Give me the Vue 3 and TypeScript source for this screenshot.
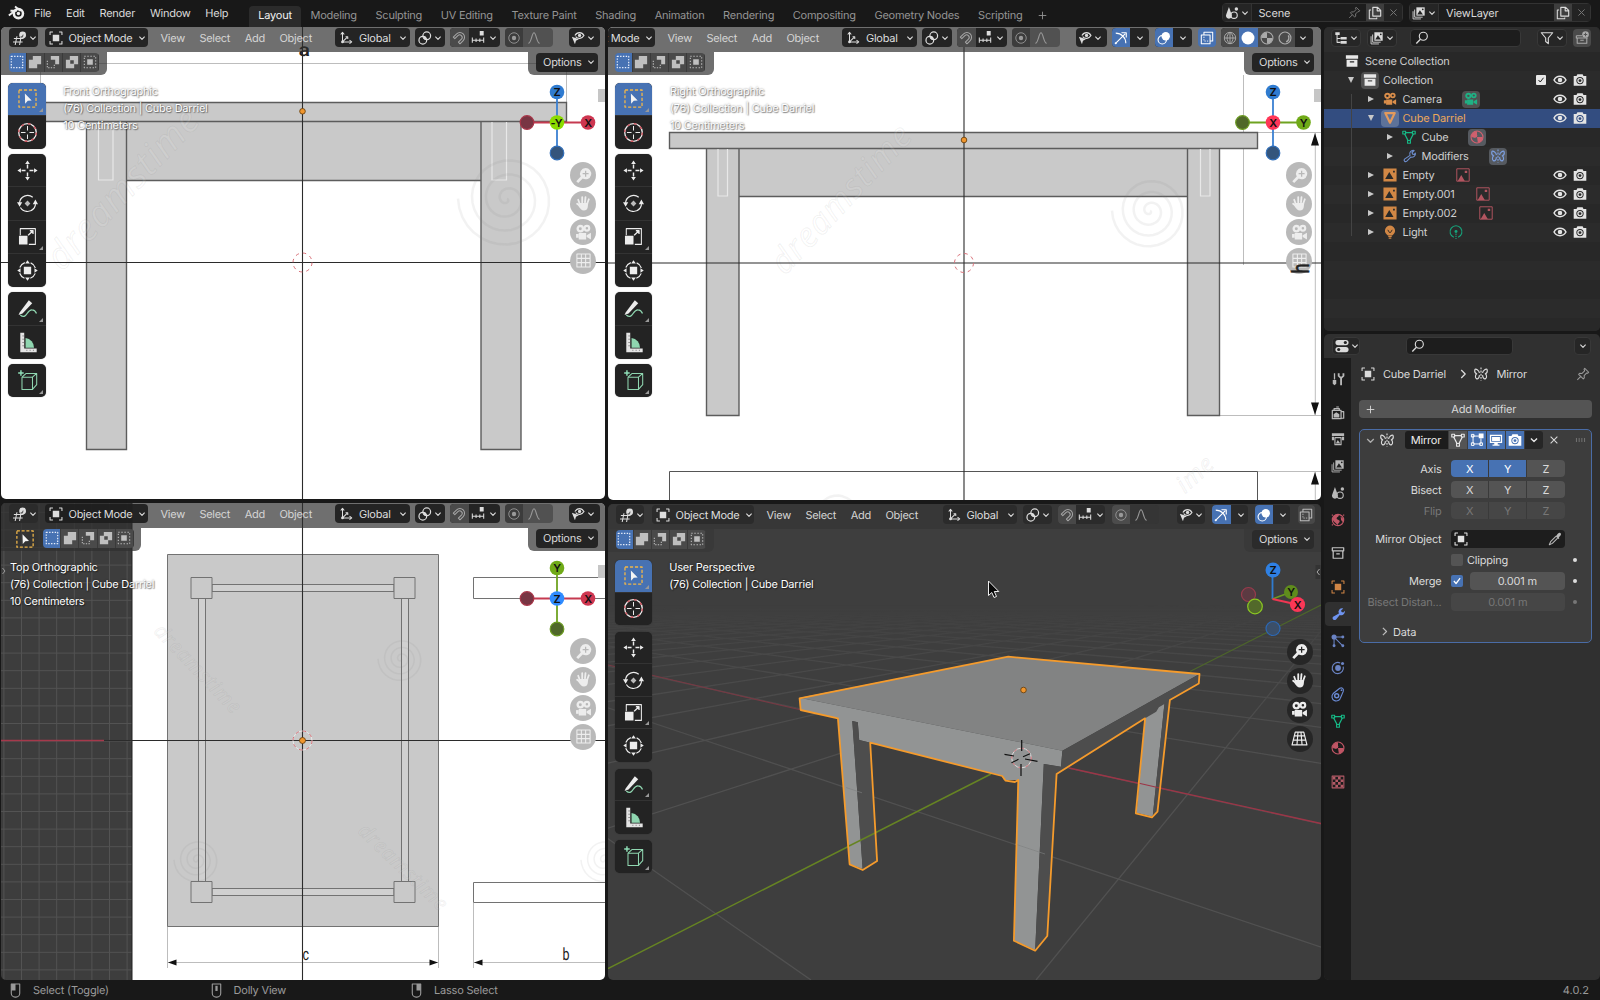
<script setup lang="ts">
import { h } from 'vue'

const s = (d: string, w = 1.2, c = 'currentColor', extra = '') =>
  `<path d="${d}" fill="none" stroke="${c}" stroke-width="${w}" stroke-linejoin="round" ${extra}/>`
const f = (d: string, c = 'currentColor') => `<path d="${d}" fill="${c}"/>`
const ring = (x: number, y: number, r: number, w = 1.2, c = 'currentColor') =>
  `<circle cx="${x}" cy="${y}" r="${r}" fill="none" stroke="${c}" stroke-width="${w}"/>`
const dot = (x: number, y: number, r: number, c = 'currentColor') => `<circle cx="${x}" cy="${y}" r="${r}" fill="${c}"/>`

const movieCamera =
  ring(5, 4.4, 2.5, 2.2) + ring(11.2, 4, 2.2, 2) + f('M3.5 8.5h7v6h-7zM11 10.5l4-2.300v6.300L11 12.300z') + f('M1 9.500h2.500v3.500H1z')
const mirror =
  s('M6.2 6.8C6 4 1.600 .8.900 3.300c-.4 2.200.800 4 2.200 4.400C1.300 9 1.200 12.300 2.700 13.300c1.900.9 3.400-1 3.500-4', 1.3) +
  s('M9.800 6.800C10 4 14.400.8 15.100 3.300c.4 2.200-.8 4-2.200 4.400 1.800 1.300 1.900 4.600.4 5.600-1.900.9-3.400-1-3.500-4', 1.3) +
  s('M8 .5v15', 1.3, 'currentColor', 'stroke-dasharray="2.200 1.400"')
const meshData =
  s('M3.500 3h9M2.900 4.200l4.200 8.200M13.100 4.200l-4.200 8.200', 1.4) +
  s('M.900 1.400h3.200v3.200H.900zM11.900 1.400h3.200v3.200h-3.200zM6.400 12h3.200v3.200h-3.200z', 1.3)

const icons: Record<string, string> = {
  blender:
    s('M.8 10.800L8.600 4.800M2.300 6.300h6', 1.800) + s('M6.600 2.300l5.400 4.200', 1.800) + ring(9.800, 9, 4.300, 2.400) + dot(9.800, 9, 1.600),
  chevron: s('M4.500 6.300L8 9.800l3.500-3.500', 1.500),
  right: s('M6 3.500L10.500 8 6 12.500', 1.500),
  plus: s('M8 2.500v11M2.500 8h11', 1.300),
  close: s('M3.500 3.500l9 9M12.500 3.500l-9 9', 1.400),
  view3d: s('M1 8.500h11M0 12.500h11M4.500 6L2.500 16M9 8l-1.500 8', 1.200) + dot(11, 4.500, 3.900) + f('M8 6.500c2 0 3-1.500 3.500-3 1 1.500 0 4-1.500 4.200z', '#555'),
  object: s('M1.200 4.500V1.200h3.300M11.500 1.200h3.300v3.300M14.800 11.500v3.300h-3.300M4.500 14.800H1.200v-3.300', 1.200) + f('M4.300 4.300h7.400v7.400H4.300z'),
  orient: s('M4 13V2.500M4 12.500h10M4 12.500L9.500 7', 1.200) + s('M2 4l2-2.500L6 4M12 10.500l2.500 2L12 14.500M7.500 6.500h2.500V9', 1.200) + dot(4, 12.500, 1.600),
  pivot: ring(10, 5.500, 4.400, 1.400) + ring(5.500, 10.500, 4.400, 1.400) + dot(7.800, 8, 1.600),
  magnet: s('M3.200 8.700L6.700 5.200a2.900 2.900 0 014.100 4.100L7.300 12.800l1.800 1.800 3.700-3.700a5.200 5.200 0 00-7.500-7.500L1.500 7z', 1.200),
  increment: s('M1.500 7.500v6M5.800 8.500v4M10.100 8.500v4M14.500 7.500v6M1.500 10.500h13', 1.200) + f('M10 0h4.500v5H10z'),
  propdot: ring(8, 8, 6, 1) + dot(8, 8, 2.500),
  curve: s('M1.500 14c3.500 0 4-12 6.500-12s3 12 6.500 12', 1.300),
  visibility: f('M1 6.500l8 3-3.300 1.500L4.500 15z') + s('M4.500 5.200c2.500-4.500 8-4.500 10.300 0-2.300 4-7 4.200-9.500 1.300', 1.400) + dot(9.800, 5, 1.900),
  gizmo: s('M2 2.500c6.500 0 11.500 5 11.500 11.500M1.500 14.500L13 3', 1.300) + s('M8.500 2H14v5.500', 1.300) + dot(2, 14, 1.200),
  overlay: dot(10, 6, 4.800) + ring(6, 10, 4.800, 1.300),
  xray: s('M1.500 4.500h10v10h-10zM4.500 4.500v-3h10v10h-3', 1.200) + s('M4.500 6.500v5h5', 1, 'currentColor', 'stroke-dasharray="1.500 1.300"'),
  wire: ring(8, 8, 6.500, 1.100) + s('M1.500 8h13M8 1.500v13M8 1.500c-4.500 3-4.500 10 0 13M8 1.500c4.500 3 4.500 10 0 13', 1.100),
  solid: dot(8, 8, 7.400),
  matprev: ring(8, 8, 6.800, 1.200) + f('M8 1.500a6.500 6.500 0 00-6.500 6.500H8zM8 8h6.500A6.500 6.500 0 018 14.500z'),
  rendered: ring(8, 8, 6.800, 1.300) + s('M11.800 5c1.500 3 .5 6.300-2.500 7.500', 1.600),
  selNew: s('M1.500 1.500h13v13h-13z', 1.400, 'currentColor', 'stroke-dasharray="1.600 1.600"'),
  selAdd: f('M5.500 1h9.500v9.500h-4.500v4.500H1V5.500h4.500z'),
  selSub: f('M5.500 1h9.500v9.500h-4.500v-5h-5z') + s('M1.500 6.500V14.500H9.500V11', 1.200, 'currentColor', 'stroke-dasharray="1.500 1.500"'),
  selXor: `<path fill-rule="evenodd" d="M5.500 1h9.500v9.500h-4.500v4.500H1V5.500h4.500zM6 6v4h4V6z" fill="currentColor"/>`,
  selAnd: s('M1.500 1.500h13v13h-13z', 1.200, 'currentColor', 'stroke-dasharray="1.500 2"') + f('M4.800 4.800h6.400v6.400H4.800z'),
  toolSelect: s('M1.500 1.500h13v13h-13z', 1, '#f0b64a', 'stroke-dasharray="2.400 1.400"') + f('M6 4.200l5.200 5.400-3 .2L6.200 12z', '#f4f4f4'),
  toolCursor:
    ring(8, 8, 6.700, 1, '#eee') +
    `<circle cx="8" cy="8" r="6.700" fill="none" stroke="#d0505a" stroke-width="1" stroke-dasharray="2.200 3.060"/>` +
    s('M8 3v3.500M8 9.500V13M3 8h3.500M9.500 8H13', .8),
  toolMove: s('M8 3.500v3M8 9.500v3M3.500 8h3M9.500 8h3', 1.100) + f('M8 .300l1.800 2.700H6.200zM8 15.700l1.800-2.700H6.200zM.3 8l2.700-1.800v3.600zM15.700 8l-2.700-1.800v3.600z'),
  toolRotate: s('M2.600 11a6.200 6.200 0 0010 1M1.900 7.500A6.200 6.200 0 0112 3.300M14.100 8.500A6.200 6.200 0 0111 13.300', .9) + f('M0 7h4l-2 3.500zM12 8.500h4L14 5z') + f('M8 5.800L10.200 8 8 10.200 5.800 8z', '#bbb'),
  toolScale: s('M2.500 7V2h11.500v12H9', .8) + f('M1.500 7.500H8V14H1.500z') + s('M8.500 7L12 3.800M9.800 3.600h2.400V6', 1),
  toolTransform:
    `<circle cx="8" cy="8" r="6.300" fill="none" stroke="currentColor" stroke-width=".9" stroke-dasharray="5.400 4.500" stroke-dashoffset="-2.250"/>` +
    f('M5.200 5.200h5.600v5.600H5.200z') + f('M8 .2l1.800 2.500H6.200zM8 15.800l1.800-2.500H6.200zM.2 8l2.500-1.800v3.600zM15.800 8l-2.500-1.800v3.600z'),
  toolNote: f('M2 11L9 1.800 11.600 4 4.200 11.800 1.200 13z') + s('M2.500 13c5 4 5-4.500 9-4 2.500.2 2.800 1.600 3.300 2.800', 1, '#8fd6b0'),
  toolMeasure: f('M2.500.5h3v12h9.500v3H2.500z', '#e4e4e4') + f('M6.500 12V4.500A7.500 7.500 0 0113 12z', '#8fd6b0') + s('M4 3h1.500M4 5.500h1.500M4 8h1.500M4 10.500h1.500M7.500 13.500v1M10 13.500v1M12.500 13.500v1', .5, '#666'),
  toolCube: s('M3.800 5.500h8v9.300h-8zM3.800 5.500L7 2.600h8L11.800 5.500M15 2.600v8.600l-3.200 3.600', .8, '#8fd6b0') + s('M3 .2v4.200M.9 2.300h4.200', 1.100, '#8fe0b8'),
  zoom: `<path fill-rule="evenodd" fill="currentColor" d="M10 1a5.300 5.300 0 11-2.700 9.900L3 15 1.200 13.300l4.200-4.300A5.300 5.300 0 0110 1zM9.400 3.500v2.200H7.200v1.200h2.200v2.200h1.200V6.900h2.200V5.700h-2.200V3.500z"/>`,
  hand: s('M4.500 8.500L3 4.500M6.800 7V2M9.400 7l.5-5M11.500 8l1.500-4M5 10.500l-3-2.300', 1.700, 'currentColor', 'stroke-linecap="round"') + f('M3.800 7.500h8.600l-.4 4c-.6 2-1.600 3-3.500 3-2.500 0-3.500-1.500-5.500-4.500z'),
  cam: movieCamera,
  grid: s('M1.800 1.800h12.400v12.400H1.800zM6 2v12M10 2v12M2 6h12M2 10h12', 1),
  persp: s('M4 2h8l3 12H1zM6.600 2L5.600 14M9.400 2l1 12M3.300 5.500h9.400M2.300 9.500h11.400', 1.100),
  tree: s('M3.500 4v9.500M3.500 8.500h4M3.500 13h4', 1.200) + f('M1.500 1.500h5v3h-5zM7.500 6.800h7v3h-7zM7.500 11.500h7v3h-7z'),
  layers: f('M5 1.500h9.500V11H5z') + s('M3 4v8.800h9.200M1.200 6v8.800h9', 1) + f('M6 9.800L9 4.800l3.500 5z', '#222') + dot(12.300, 3.800, 1, '#222'),
  search: ring(9.500, 6, 4.600, 1.300) + s('M6.200 9.500L1.500 14.300', 1.500),
  filter: s('M1.500 2h13L9.500 8v6.500L6.500 12V8z', 1.300),
  newColl: s('M1.500 5.500h6.500M13.500 8v6h-11V8M1.500 5.500V8H14.500', 1.200) + s('M6 10.500h4', 1.200) + dot(12, 4, 3.800) + s('M12 2v4M10 4h4', 1.200, '#555'),
  pin: s('M10 1.500l4.500 4.500-1 1-1.200-.2-3 3 .2 2.700-1.200 1.200L3 8.400l1.200-1.200 2.700.2 3-3L9.200 2.600zM5.500 10.700L1.500 14.700', 1.200),
  copy: s('M5.500 1.500h5.500l3.500 3.500v6.500h-9zM10.500 1.800v3.700h3.800', 1.300) + s('M3.500 4.500h-2v10h8.500v-1.500', 1.200),
  collection: f('M1 1.500h14v4H1z') + `<path fill-rule="evenodd" fill="currentColor" d="M1.800 6.500h12.400v8H1.800zM5.500 8.300v1.500h5V8.300z"/>`,
  archive: s('M1.500 2h13v3.500h-13zM2.500 5.500v8.500h11V5.500M6 9h4', 1.400),
  tri: s('M2.600 2.400h10.800L8 13.400z', 2.500),
  mesh: meshData,
  wrench: s('M9.200 7.300a4 4 0 014.600-5.600L11.500 4l.6 1.800 1.900.4 1.300-1.500c.5 3-2.200 5.300-5.300 4.500L5.500 13.900c-1.800 1.500-4-.5-2.600-2.300z', 1.300),
  wrenchFill: f('M9 7.500a4.200 4.200 0 015-5.900L11.500 4l.6 1.800 1.900.4 1.700-2c.7 3.500-2.500 6-5.700 5L5.800 14.200c-2.200 2-5.300-.8-3.400-3.200z'),
  image: `<path fill-rule="evenodd" fill="currentColor" d="M.5.5h15v15H.5zM2.500 12.500h9.500L7.200 4.500zM11.500 3v2h2V3z"/>`,
  imageLine: s('M.9.9h14.200v14.200H.900z', 1.100) + f('M2 14.800L6 8l4 6.800zM10 3h2.800v2.800H10z'),
  light: f('M8 .5a6 6 0 014 10.200L10.500 12h-5L4 10.700A6 6 0 018 .5z') + s('M6 13h4M6.500 15h3', 1.300) + s('M5.500 5.500l1.800 3h1.400l1.800-3', 1, '#222'),
  lightData: s('M5.500 14A6.800 6.800 0 1110.500 14', 1.300) + dot(8, 7.500, 1.700) + s('M8 9.800v6.200', 1.300, 'currentColor', 'stroke-dasharray="1.500 1"'),
  material: ring(8, 8, 6.800, 1.300) + f('M8 1.500A6.500 6.500 0 001.500 8l4 .8L8 8zM8 8l1 6.500C12.500 14 14.500 11 14.500 8z') + dot(5.500, 6, 2.700),
  mirror,
  eye: s('M1.200 8c3-5.600 10.600-5.600 13.600 0-3 5.600-10.600 5.600-13.600 0z', 1.800) + dot(8, 8, 2.600),
  photo: `<path fill-rule="evenodd" fill="currentColor" d="M.8 3.500H4l1-2.200h6l1 2.200h3.200v11H.8zM8 4.500a4.200 4.200 0 100 8.400 4.200 4.200 0 000-8.400z"/>` + ring(8, 8.700, 2.400, 1.400),
  tools: s('M4 1.500v7', 1.500) + f('M2 9h4v4.500L4 15l-2-1.500z') + s('M8.800 1.500v3L11.500 7l2.700-2.500v-3M11.500 7v8', 2.100),
  render: s('M1.500 5h10v9.500h-10zM3.500 5V3h6v2M11.500 6.500h3V14h-3', 1.400) + f('M3 9.500l3-2.500 3.500 2.500V13H3z') + s('M6 1.200h3', 1.200),
  output: f('M1 1.500h14v3H1zM1 5.500h2.500v4H1zM12.500 5.500H15v4h-2.500z') + s('M4.500 6.500h7v8h-7z', 1.300) + f('M5.500 13l2.300-4 2.800 4z'),
  scene: f('M4.500 1l3 8.500a3.400 3.400 0 11-6 0z') + ring(10.300, 10.500, 3.700, 1.300) + dot(13, 3.500, 2),
  world: ring(8, 8, 6.500, 1.300) + f('M3 3.500c2-2 5.500-2 6-1 0 2-3 2-2.500 4 1 1.500 3.500 1 3.500 3S7.500 12 7.500 14C5.500 11 2.500 10 2 7.500zM11 4l3 2.500-.5 4-2-2.500z') + s('M1.500 1.500v2M14.500 1.500v2M1.500 14.500v-2', 1),
  particles: s('M3.500 3.500h10M3.500 3.500v10M3.500 3.500l10 10', 1.200) + dot(3.500, 3.500, 2.900) + dot(13.500, 3.500, 1.700) + dot(3.500, 13.500, 1.700) + dot(13.500, 13.500, 1.700),
  physics: s('M10.500 2.200A6.400 6.400 0 1014 6.500', 1.300) + dot(8, 8, 3.300) + dot(13.200, 2.800, 1.800),
  constraint: s('M2.500 7.500L10 1.500c2.500-1.500 5 .5 4 3.500L11 12A5 5 0 112.500 7.500z', 1.300) + ring(6.500, 10, 2.300, 1.600) + dot(12, 3.700, 1),
  texture: s('M1.300 1.300h13.400v13.400H1.300z', 1.200) + f('M2 2h3v3H2zM8 2h3v3H8zM5 5h3v3H5zM11 5h3v3h-3zM2 8h3v3H2zM8 8h3v3H8zM5 11h3v3H5zM11 11h3v3h-3z'),
  editmode: s('M3 3.500h8M3.500 3v9M4 12.500h8.500M12.500 12V6', 1.100) + s('M1.600 1.600h3v3h-3zM1.600 11.200h3v3h-3zM11.200 11.200h3v3h-3z', 1.100) + f('M10 .5h5.500V6H10z'),
  monitor: `<path fill-rule="evenodd" fill="currentColor" d="M1 2h14v9.500H1zM2.500 3.500V10h11V3.500z"/>` + f('M3.500 4.500h9V9h-9zM6 11.500h4v1.500h2v1.500H4V13h2z'),
  dropper: f('M9 4.500l1-.8c1-2 2.500-3.200 4-2.700 1.300.6 1.300 2.500-1 4.300l-.7 1 .7.800-1 1L8 4.300z') + s('M9 5L3 11l-1.500 3.500L5 13l6-6', 1.200),
  props: f('M3.500 1h9a3 3 0 010 6h-9a3 3 0 010-6z') + dot(11.800, 4, 1.800, '#222') + f('M3.500 9h9a3 3 0 010 6h-9a3 3 0 010-6z') + dot(4.200, 12, 1.800, '#222'),
  check: s('M3 8l3.500 4L13 3.500', 2),
  mouseL: s('M3.500 1h9v10a4 4 0 01-4 4h-1a4 4 0 01-4-4z', 1.200) + f('M3.500 1H8v7H3.500z'),
  mouseM: s('M3.500 1h9v10a4 4 0 01-4 4h-1a4 4 0 01-4-4z', 1.200) + f('M6.800 3h2.400v5.500H6.800z'),
  mouseR: s('M3.500 1h9v10a4 4 0 01-4 4h-1a4 4 0 01-4-4z', 1.200) + f('M8 1h4.500v7H8z'),
}

const Icon = (p: { n: string }) => h('svg', { viewBox: '0 0 16 16', class: 'ic', fill: 'currentColor', innerHTML: icons[p.n] })

const menus = ['File', 'Edit', 'Render', 'Window', 'Help']
const workspaces = ['Layout', 'Modeling', 'Sculpting', 'UV Editing', 'Texture Paint', 'Shading', 'Animation', 'Rendering', 'Compositing', 'Geometry Nodes', 'Scripting']

interface View {
  id: string
  box: string
  lines: string[]
  tools: boolean
  nav: string
}
const front: View = { id: 'front', box: '1 27 603.5 472', lines: ['Front Orthographic', '(76) Collection | Cube Darriel', '10 Centimeters'], tools: true, nav: 'grid' }
const top: View = { id: 'top', box: '1 503 603.5 476.5', lines: ['Top Orthographic', '(76) Collection | Cube Darriel', '10 Centimeters'], tools: false, nav: 'grid' }
const right: View = { id: 'side', box: '608 27 712.5 473', lines: ['Right Orthographic', '(76) Collection | Cube Darriel', '10 Centimeters'], tools: true, nav: 'grid' }
const user: View = { id: 'user', box: '608 504 712.5 475.5', lines: ['User Perspective', '(76) Collection | Cube Darriel'], tools: true, nav: 'persp' }
const columns = [[front, top], [right, user]]

const selModes = ['selNew', 'selAdd', 'selSub', 'selXor', 'selAnd']
const toolGroups = [['toolSelect', 'toolCursor'], ['toolMove', 'toolRotate', 'toolScale', 'toolTransform'], ['toolNote', 'toolMeasure'], ['toolCube']]
const cornered = ['toolSelect', 'toolScale', 'toolNote', 'toolCube']

// Floor grid: both line families are evenly spaced where they cross the bottom edge.
const floor: string[] = []
for (let k = -9; k <= 24; k++) floor.push(`M245 586L${2027 + 608 * k} 980`)
for (let k = -24; k <= 9; k++) if (k !== 0) floor.push(`M1357 587L${586 + 450 * k} 980`)
const floorPath = floor.join('')

const gridPath =
  Array.from({ length: 8 }, (_, i) => `M${(3.9 + 17.6 * i).toFixed(1)} 503V980`).join('') +
  Array.from({ length: 27 }, (_, i) => `M1 ${(512.3 + 17.6 * i).toFixed(1)}H132`).join('')

const swirl = (cx: number, cy: number, r: number) => {
  let d = `M${cx} ${cy}`
  for (let a = 0; a <= 110; a++) {
    const t = a * 0.2
    const q = (r * t) / 22
    d += `L${(cx + q * Math.cos(t)).toFixed(1)} ${(cy + q * Math.sin(t)).toFixed(1)}`
  }
  return d
}

interface Row { name: string; icon: string; color: string; depth: number; open?: boolean; extra?: string; extraColor?: string; boxed?: boolean; iconBox?: boolean; active?: boolean; toggles?: boolean; check?: boolean }
const rows: Row[] = [
  { name: 'Collection', icon: 'collection', color: '#e8e8e8', depth: 0, open: true, iconBox: true, toggles: true, check: true },
  { name: 'Camera', icon: 'cam', color: '#d98d4a', depth: 1, extra: 'cam', extraColor: '#1fb184', boxed: true, toggles: true },
  { name: 'Cube Darriel', icon: 'tri', color: '#e39a5c', depth: 1, open: true, iconBox: true, active: true, toggles: true },
  { name: 'Cube', icon: 'mesh', color: '#16b986', depth: 2, extra: 'material', extraColor: '#d0606e', boxed: true },
  { name: 'Modifiers', icon: 'wrench', color: '#6c8ccb', depth: 2, extra: 'mirror', extraColor: '#7c9fe0', boxed: true },
  { name: 'Empty', icon: 'image', color: '#d18745', depth: 1, extra: 'imageLine', extraColor: '#b35560', toggles: true },
  { name: 'Empty.001', icon: 'image', color: '#d18745', depth: 1, extra: 'imageLine', extraColor: '#b35560', toggles: true },
  { name: 'Empty.002', icon: 'image', color: '#d18745', depth: 1, extra: 'imageLine', extraColor: '#b35560', toggles: true },
  { name: 'Light', icon: 'light', color: '#d18745', depth: 1, extra: 'lightData', extraColor: '#16a57c', toggles: true },
]

const tabs = [
  { i: 'tools', c: '#b8b8b8', end: true }, { i: 'render', c: '#b8b8b8' }, { i: 'output', c: '#b8b8b8' }, { i: 'layers', c: '#b8b8b8' },
  { i: 'scene', c: '#b8b8b8' }, { i: 'world', c: '#c05565', end: true }, { i: 'archive', c: '#c4c4c4', end: true }, { i: 'object', c: '#d08545' },
  { i: 'wrenchFill', c: '#6f94f0', on: true }, { i: 'particles', c: '#6a83c4' }, { i: 'physics', c: '#6a83c4' }, { i: 'constraint', c: '#6a8ad4' },
  { i: 'mesh', c: '#16b986' }, { i: 'material', c: '#c05565', end: true }, { i: 'texture', c: '#b25a66' },
]
const axes = [
  { label: 'Axis', on: 2 }, { label: 'Bisect', on: 0 }, { label: 'Flip', on: 0, off: true },
]
const hints = [{ i: 'mouseL', t: 'Select (Toggle)' }, { i: 'mouseM', t: 'Dolly View' }, { i: 'mouseR', t: 'Lasso Select' }]
</script>

<template>
  <div class="app">
    <header class="topbar">
      <Icon n="blender" class="logo" />
      <nav class="menus"><span v-for="m in menus" :key="m">{{ m }}</span></nav>
      <nav class="tabs">
        <span v-for="(w, i) in workspaces" :key="w" :class="{ on: i === 0 }">{{ w }}</span>
        <Icon n="plus" class="addtab" />
      </nav>
      <div class="idblock scene-id">
        <span class="pick"><Icon n="scene" /><Icon n="chevron" class="chev" /></span>
        <span class="name">Scene</span>
        <Icon n="pin" class="dim pinned" /><span class="copy"><Icon n="copy" /></span><span class="x"><Icon n="close" class="dim" /></span>
      </div>
      <div class="idblock layer-id">
        <span class="pick"><Icon n="layers" /><Icon n="chevron" class="chev" /></span>
        <span class="name">ViewLayer</span>
        <span class="copy"><Icon n="copy" /></span><span class="x"><Icon n="close" class="dim" /></span>
      </div>
    </header>

    <main class="work">
      <div v-for="(col, ci) in columns" :key="ci" class="col" :class="'col' + ci">
        <section v-for="v in col" :key="v.id" class="view" :class="v.id">
          <svg class="canvas" :viewBox="v.box" preserveAspectRatio="none">
            <template v-if="v.id === 'front'">
              <rect x="0" y="27" width="605" height="473" fill="#fff" />
              <path d="M40.500 104V63.500H566.500V104" class="pale" />
              <g class="solid">
                <path d="M86.500 121.500h40v328h-40zM481 121.500h40v328h-40zM126.500 121.500H481v59H126.500zM40 102.500H566.500v19H40z" />
              </g>
              <path d="M98.500 122v58h14.500v-58M492 122v58h14.500v-58" class="inner" />
              <path :d="swirl(507, 199, 49)" class="mark" />
              <text class="wm" transform="translate(62 272) rotate(-47)" font-size="37">dreamstime</text>
              <path d="M302.500 27V499M1 262.500H605" class="axis" />
              <text x="298.500" y="56" class="dimtext big" textLength="11.500" lengthAdjust="spacingAndGlyphs">a</text>
              <circle cx="302.500" cy="262.500" r="9.500" class="cursor" />
              <circle cx="302.500" cy="111.300" r="2.800" class="origin" />
              <path d="M598 89h7v13h-7z" fill="#c6c6c6" />
              <g class="gz">
                <path d="M557 92v61" stroke="#3a80d2" /><path d="M527 122.500h61" stroke="#c53a50" />
                <circle cx="557" cy="92" r="7.300" fill="#2f7bd0" /><circle cx="557" cy="153" r="6.800" fill="#34557c" stroke="#2f6db8" />
                <circle cx="527" cy="122.500" r="6.800" fill="#783543" stroke="#a83548" /><circle cx="588" cy="122.500" r="7.300" fill="#ce3650" />
                <circle cx="557" cy="122.500" r="7.300" fill="#8bdc00" />
                <text x="557" y="96">Z</text><text x="588" y="126.500">X</text><text x="556.500" y="126.500">-Y</text>
              </g>
            </template>

            <template v-else-if="v.id === 'side'">
              <rect x="608" y="27" width="713" height="474" fill="#fff" />
              <path d="M1243.500 75V265M1257 132.500H1321M1220 415.500H1321M1257 471.500H1321M1315.300 133V415M1315.300 472V500" class="pale" />
              <g class="solid">
                <path d="M706.500 148.500h32.500v267h-32.500zM1187.500 148.500h32v267h-32zM739 148.500h448.500v48H739zM669.500 132.500H1257.500v16H669.500z" />
              </g>
              <path d="M718 149v47h9.500v-47M1200.500 149v47h9.500v-47" class="inner" />
              <path d="M669.500 500V471.500H1257.500V500" fill="none" stroke="#555" />
              <path d="M1315 133l4 12.500h-8zM1315 415l4-12.500h-8zM1315 472l4 12.500h-8z" fill="#111" />
              <path :d="swirl(1150, 211, 38)" class="mark" />
              <path :d="swirl(836, 516, 26)" class="mark" />
              <text class="wm" transform="translate(785 276) rotate(-47)" font-size="34">dreamstime</text>
              <text class="wm" transform="translate(1185 494) rotate(-42)" font-size="24">ime</text>
              <path d="M964 40V500M608 263H1321" class="axis" />
              <circle cx="964" cy="263" r="9.500" class="cursor" />
              <circle cx="964" cy="140" r="2.800" class="origin" />
              <path d="M1314 89h7v13h-7z" fill="#c6c6c6" />
              <g class="gz">
                <path d="M1273 92v61" stroke="#3a80d2" /><path d="M1242.500 122.500h61" stroke="#6fa321" />
                <circle cx="1273" cy="92" r="7.300" fill="#2f7bd0" /><circle cx="1273" cy="153" r="6.800" fill="#34557c" stroke="#2f6db8" />
                <circle cx="1242.500" cy="122.500" r="6.800" fill="#50682a" stroke="#6a9a20" /><circle cx="1303.500" cy="122.500" r="7.300" fill="#70aa18" />
                <circle cx="1273" cy="122.500" r="7.300" fill="#ff3658" />
                <text x="1273" y="96">Z</text><text x="1273" y="126.500">X</text><text x="1303.500" y="126.500">Y</text>
              </g>
            </template>

            <template v-else-if="v.id === 'top'">
              <rect x="0" y="503" width="132" height="477" fill="#3d3d3d" />
              <path :d="gridPath" stroke="#535353" fill="none" />
              <rect x="132" y="503" width="474" height="477" fill="#fff" />
              <path d="M132 503V980" stroke="#222" />
              <path d="M167.500 926V968M438.500 926V968M473.500 903V968M168 962.500H438M474 962.500H605" class="pale" />
              <g class="thin">
                <path d="M167.500 554.500h271v372h-271z" />
                <path d="M212 584.500H394v7H212zM212 888.500H394v7H212zM198.500 598V882h7V598zM401.500 598V882h7V598z" fill="#d0d0d0" />
                <path d="M191 577.500h21v21h-21zM394 577.500h21v21h-21zM191 881.500h21v21h-21zM394 881.500h21v21h-21z" />
                <path d="M473.500 577.500H606v21H473.500zM473.500 882.500H606v20H473.500z" fill="#fff" />
              </g>
              <path d="M168 962.500l8.500-3v6zM438 962.500l-8.500-3v6zM474 962.500l8.500-3v6z" fill="#111" />
              <path :d="swirl(401, 659, 23)" class="mark fine" /><path :d="swirl(197, 860, 23)" class="mark fine" /><path :d="swirl(604, 860, 23)" class="mark fine" />
              <text class="wm" transform="translate(153 632) rotate(46)" font-size="20">dreamstime</text>
              <text class="wm" transform="translate(357 832) rotate(44)" font-size="20">dreamstime</text>
              <path d="M302.500 503V980M104 740.500H605" class="axis" />
              <path d="M1 740.500H104" stroke="#a5394b" stroke-width="1.300" />
              <text x="302.500" y="960" class="dimtext" textLength="6.500" lengthAdjust="spacingAndGlyphs">c</text>
              <text x="562.500" y="960" class="dimtext" textLength="7" lengthAdjust="spacingAndGlyphs">b</text>
              <circle cx="302.500" cy="740.500" r="9.500" fill="none" stroke="#fff" opacity=".6" />
              <circle cx="302.500" cy="740.500" r="9.500" class="cursor" />
              <circle cx="302.500" cy="740.500" r="3" class="origin" />
              <path d="M598 565h7v13h-7z" fill="#c6c6c6" />
              <path d="M2.500 568l2.500 3-2.500 3" stroke="#999" fill="none" />
              <g class="gz">
                <path d="M557 568v61" stroke="#6fa321" /><path d="M527 598.500h61" stroke="#c53a50" />
                <circle cx="557" cy="568" r="7.300" fill="#70aa18" /><circle cx="557" cy="629" r="6.800" fill="#50682a" stroke="#6a9a20" />
                <circle cx="527" cy="598.500" r="6.800" fill="#783543" stroke="#a83548" /><circle cx="588" cy="598.500" r="7.300" fill="#ce3650" />
                <circle cx="557" cy="598.500" r="7.300" fill="#2f8cff" />
                <text x="557" y="572">Y</text><text x="588" y="602.500">X</text><text x="557" y="602.500">Z</text>
              </g>
            </template>

            <template v-else>
              <defs>
                <linearGradient id="fade" x1="0" y1="605" x2="0" y2="780" gradientUnits="userSpaceOnUse">
                  <stop offset="0" stop-color="#fff" stop-opacity="0" /><stop offset=".3" stop-color="#fff" stop-opacity=".55" /><stop offset="1" stop-color="#fff" />
                </linearGradient>
                <mask id="floor-mask" maskUnits="userSpaceOnUse" x="600" y="504" width="730" height="480"><rect x="600" y="504" width="730" height="480" fill="url(#fade)" /></mask>
              </defs>
              <rect x="608" y="504" width="713" height="476" fill="#3e3e3e" />
              <path :d="floorPath" stroke="#515151" stroke-width="1.300" fill="none" mask="url(#floor-mask)" />
              <path d="M608 665L803.500 710.500" stroke="#763a44" stroke-width="1.200" /><path d="M1069 768L1321 823.500" stroke="#9c3547" stroke-width="1.300" />
              <path d="M608 968.500L991 774" stroke="#668423" stroke-width="1.500" /><path d="M1190 671.500L1321 605" stroke="#4d662a" stroke-width="1.300" />
              <path fill="#828383" d="M799.600 697.700L1008.300 656.700 1199.500 674 1062.400 750.700z" />
              <path fill="#929494" d="M799.600 697.700L1062.400 750.700 1061 766.700 1043.800 764 1035.200 950 1014.200 940.700 1018 780 1004 780 1002 776 870.200 742.700 859.200 740 857.800 722.300 852.300 721 862.700 869 849.600 864.300 838 718 800.700 710z" />
              <path fill="#4d4d4d" d="M852.300 721l5.500 1.300 1.400 17.700 11 2.700 6.600 118.300-14.100 9zM1043.800 764l17.200 2.700-4.400 8.300-9.300 161-12.100 14zM1062.400 750.700L1199.500 674l-.8 10-28.900 16-10 10-3.600 3-11.100 5.300-88.500 56.700 4.400-8.300z" />
              <path fill="#929494" d="M1145.100 718.300l11.100-6.600 2.700-4.400 5.500-3.300-11.700 112.700-16.200-4z" /><path fill="#4d4d4d" d="M1164.400 704l5.500-4-12.400 111.700-4.800 5z" />
              <path d="M849 846L877 832" stroke="#668423" stroke-width="1.400" /><path d="M1138 783L1162 788.500" stroke="#9c3547" stroke-width="1.200" />
              <path d="M846 787.500l16 5.300M1015 844l30 10" stroke="#7e8080" opacity=".6" />
              <path class="outline" d="M799.600 698.300L1008.300 656.700 1199.500 674 1198.800 683.500 1169.900 700 1157.500 811.700 1152 817.300 1135.800 813.300 1145.100 718.300 1056.600 774 1047.300 936 1035.200 950.700 1013.900 940.700 1018.300 780 1014.900 782 1005.600 780.700 1002.200 776 870.200 742.700 877.100 861 862.700 870 849.600 864.300 837.900 718.300 800.700 710z" />
              <circle cx="1023.500" cy="690" r="2.800" class="origin" />
              <circle cx="1021.500" cy="758" r="9.800" fill="none" stroke="#ddd" /><circle cx="1021.500" cy="758" r="9.800" class="cursor" />
              <path d="M1021.700 740v11M1021 764v12M1004.500 754.300l9.500 1.700M1025 759l12.500 2.300M1011.500 762.700l7-3.400M1023 756.700l7-3" stroke="#111" stroke-width="1.200" />
              <path d="M988.500 581v14.500l3.300-3 2.200 5 2.500-1-2.200-5h4.500z" fill="#080808" stroke="#eee" />
              <path d="M1320.500 565h-5v14h5z" fill="#333" /><path d="M1319.500 569l-2.500 3 2.500 3" stroke="#aaa" fill="none" />
              <g class="gz">
                <path d="M1272.500 599V570" stroke="#2f7bd0" /><path d="M1272.500 599L1291 592" stroke="#6a9a20" /><path d="M1272.500 599L1297 604.500" stroke="#f03652" />
                <circle cx="1248.500" cy="594.500" r="7" fill="#5c3a42" stroke="#983b4c" /><circle cx="1255" cy="606.500" r="7.300" fill="#52692a" stroke="#8bc822" />
                <circle cx="1273" cy="628.500" r="7" fill="#3b4f69" stroke="#2c68b4" />
                <circle cx="1273" cy="570" r="7.500" fill="#2f80e4" /><circle cx="1291" cy="592" r="7" fill="#5f8c1c" /><circle cx="1297.500" cy="604.500" r="7.600" fill="#fa3756" />
                <text x="1273" y="574">Z</text><text x="1291" y="596">Y</text><text x="1297.500" y="608.500">X</text>
              </g>
            </template>
          </svg>

          <div class="head">
            <span class="btn editor"><Icon n="view3d" /><Icon n="chevron" class="chev" /></span>
            <span class="btn mode"><Icon n="object" /><span class="label">Object Mode</span><Icon n="chevron" class="chev" /></span>
            <span class="vmenus"><span>View</span><span>Select</span><span>Add</span><span>Object</span></span>
            <span class="btn orient"><Icon n="orient" /><span class="label">Global</span><Icon n="chevron" class="chev" /></span>
            <span class="btn pivot"><Icon n="pivot" /><Icon n="chevron" class="chev" /></span>
            <span class="btn snap"><span class="half"><Icon n="magnet" /></span><Icon n="increment" /><Icon n="chevron" class="chev" /></span>
            <span class="btn prop"><span class="half"><Icon n="propdot" /></span><Icon n="curve" /></span>
            <span class="btn vis"><Icon n="visibility" /><Icon n="chevron" class="chev" /></span>
            <template v-if="v.id === 'side' || v.id === 'user'">
              <span class="btn pair"><span class="half on"><Icon n="gizmo" /></span><Icon n="chevron" class="chev" /></span>
              <span class="btn pair"><span class="half on"><Icon n="overlay" /></span><Icon n="chevron" class="chev" /></span>
              <span class="btn xray" :class="{ on: v.id === 'side' }"><Icon n="xray" /></span>
            </template>
            <span v-if="v.id === 'side'" class="btn shade">
              <span class="half"><Icon n="wire" /></span><span class="half on"><Icon n="solid" /></span><span class="half"><Icon n="matprev" /></span><span class="half"><Icon n="rendered" /></span><Icon n="chevron" class="chev" />
            </span>
          </div>
          <div class="sub">
            <div class="subleft">
              <Icon v-if="!v.tools" n="toolSelect" class="cur" />
              <span class="modes"><span v-for="(m, i) in selModes" :key="m" :class="{ on: i === 0 }"><Icon :n="m" /></span></span>
            </div>
            <div class="subright"><span class="btn options"><span>Options</span><Icon n="chevron" class="chev" /></span></div>
          </div>

          <div class="body">
            <div v-if="v.tools" class="toolbar">
              <div v-for="(g, gi) in toolGroups" :key="gi" class="group">
                <span v-for="(t, ti) in g" :key="t" class="tool" :class="{ on: gi === 0 && ti === 0, corner: cornered.includes(t) }"><Icon :n="t" /></span>
              </div>
            </div>
            <div class="info"><p v-for="l in v.lines" :key="l">{{ l }}</p></div>
            <div class="nav">
              <span v-for="n in ['zoom', 'hand', 'cam', v.nav]" :key="n"><Icon :n="n" /></span>
            </div>
          </div>
          <svg v-if="v.id === 'side'" class="hdim" viewBox="0 0 18 12"><text transform="translate(17 11.500) rotate(-90)" textLength="10" lengthAdjust="spacingAndGlyphs">h</text></svg>
        </section>
      </div>

      <aside class="side-col">
        <section class="outliner">
          <div class="ohead">
            <span class="obtn"><Icon n="tree" /><Icon n="chevron" class="chev" /></span>
            <span class="obtn"><Icon n="layers" /><Icon n="chevron" class="chev" /></span>
            <span class="field"><Icon n="search" /></span>
            <span class="obtn filt"><Icon n="filter" /><Icon n="chevron" class="chev" /></span>
            <span class="newc"><Icon n="newColl" /></span>
          </div>
          <div class="tree">
            <div class="row root"><Icon n="collection" /><span>Scene Collection</span></div>
            <div v-for="r in rows" :key="r.name" class="row" :class="['d' + r.depth, { active: r.active }]">
              <i class="tri" :class="{ open: r.open }"></i>
              <span class="ibox" :class="{ boxed: r.iconBox }" :style="{ color: r.color }"><Icon :n="r.icon" /></span>
              <span class="rname">{{ r.name }}</span>
              <span v-if="r.extra" class="ibox extra" :class="{ boxed: r.boxed }" :style="{ color: r.extraColor }"><Icon :n="r.extra" /></span>
              <span v-if="r.toggles" class="toggles"><span v-if="r.check" class="cbx"><Icon n="check" /></span><Icon n="eye" /><Icon n="photo" class="ph" /></span>
            </div>
            <i class="guide"></i>
          </div>
        </section>

        <section class="props">
          <div class="phead">
            <span class="obtn"><Icon n="props" /><Icon n="chevron" class="chev" /></span>
            <span class="field"><Icon n="search" /></span>
            <span class="obtn drop"><Icon n="chevron" class="chev" /></span>
          </div>
          <div class="pbody">
            <nav class="ptabs">
              <span v-for="t in tabs" :key="t.i" :class="{ on: t.on, end: t.end }" :style="{ color: t.c }"><Icon :n="t.i" /></span>
            </nav>
            <div class="pmain">
              <div class="crumb"><Icon n="object" /><span class="c1">Cube Darriel</span><Icon n="right" class="sep" /><Icon n="mirror" /><span class="c2">Mirror</span><Icon n="pin" class="pin" /></div>
              <div class="addmod"><Icon n="plus" /><span>Add Modifier</span></div>
              <div class="panel">
                <div class="pnhead">
                  <Icon n="chevron" class="fold" /><Icon n="mirror" class="mi" />
                  <span class="mname">Mirror</span>
                  <span class="mb"><Icon n="mesh" /></span><span class="mb on"><Icon n="editmode" /></span><span class="mb on"><Icon n="monitor" /></span><span class="mb on"><Icon n="photo" /></span><span class="mb dd"><Icon n="chevron" /></span>
                  <Icon n="close" class="cx" /><i class="grip"></i>
                </div>
                <div v-for="a in axes" :key="a.label" class="prow" :class="{ off: a.off }">
                  <label>{{ a.label }}</label>
                  <span class="tri3"><span v-for="(l, i) in ['X', 'Y', 'Z']" :key="l" :class="{ on: i < a.on }">{{ l }}</span></span>
                </div>
                <div class="prow gap"><label>Mirror Object</label><span class="pick"><Icon n="object" /><Icon n="dropper" class="dr" /></span></div>
                <div class="prow"><label></label><span class="cb"></span><span class="cl">Clipping</span><i class="kd"></i></div>
                <div class="prow"><label>Merge</label><span class="cb on"><Icon n="check" /></span><span class="num short">0.001 m</span><i class="kd"></i></div>
                <div class="prow off"><label>Bisect Distan...</label><span class="num">0.001 m</span><i class="kd"></i></div>
                <div class="data"><Icon n="right" /><span>Data</span></div>
              </div>
            </div>
          </div>
        </section>
      </aside>
    </main>

    <footer class="status">
      <span v-for="x in hints" :key="x.i" class="hint"><Icon :n="x.i" />{{ x.t }}</span>
      <span class="ver">4.0.2</span>
    </footer>
  </div>
</template>

<style>
body { margin: 0; background: #181818; overflow: hidden; }
</style>

<style scoped>
* { box-sizing: border-box; }
.app { width: 1600px; height: 1000px; background: #181818; color: #dadada; font: 11px/14px Inter, "Noto Sans", sans-serif; letter-spacing: -.2px; text-rendering: geometricPrecision; display: flex; flex-direction: column; overflow: hidden; white-space: nowrap; }
.ic { width: 14px; height: 14px; flex: none; display: block; overflow: visible; }
.chev { width: 12px; height: 12px; }
span { flex: none; }

/* top bar */
.topbar { height: 27px; flex: none; display: flex; position: relative; padding-left: 8px; }
.logo { width: 17px; height: 17px; margin-top: 4px; color: #eee; }
.menus { display: flex; gap: 14.800px; padding: 5.500px 0 0 9px; width: 224px; letter-spacing: -.25px; }
.tabs { display: flex; padding-top: 6px; color: #949494; letter-spacing: -.24px; }
.tabs span { padding: 2px 9.350px 0; height: 21px; }
.tabs .on { background: #2b2b2b; color: #f0f0f0; border-radius: 4px 4px 0 0; }
.addtab { width: 11px; height: 11px; margin: 4px 0 0 5px; }
.idblock { display: flex; height: 19px; margin-top: 3px; border: 1px solid #333; border-radius: 4px; background: #1d1d1d; align-items: center; }
.scene-id { margin-left: auto; width: 181.500px; }
.layer-id { width: 182px; margin: 3px 9px 0 6px; }
.pick { display: flex; align-items: center; }
.idblock .pick { width: 29px; height: 17px; padding-left: 2px; background: #252525; border-right: 1px solid #333; }
.name { padding-left: 7px; flex: 1; }
.dim { color: #777; width: 11px; height: 11px; }
.pinned { width: 13px; height: 13px; margin-right: 5px; }
.copy { width: 18px; height: 17px; background: #3e3e3e; display: grid; place-items: center; }
.x { width: 18px; height: 17px; background: #232323; display: grid; place-items: center; }

/* work area */
.work { display: flex; gap: 3.500px; padding-left: 1px; height: 953px; flex: none; }
.col { display: flex; flex-direction: column; gap: 4px; }
.col0 { width: 603.500px; }
.col1 { width: 712.500px; }
.view { position: relative; border-radius: 5px; overflow: hidden; display: flex; flex-direction: column; }
.front { height: 472px; }
.top { height: 476.500px; }
.side { height: 473px; }
.user { height: 475.500px; }
.canvas { position: absolute; inset: 0; width: 100%; height: 100%; }

.head { position: relative; height: 25px; flex: none; background: rgba(46, 46, 46, .69); display: flex; padding: 1px 0 0 8px; overflow: hidden; color: #dedede; }
.side .head { padding-left: 0; }
.side .editor { margin-left: -92px; }
.btn { height: 19px; background: rgba(30, 30, 30, .93); border-radius: 4px; display: flex; align-items: center; overflow: hidden; }
.user .btn, .top .editor { background: #2b2b2b; }
.editor { width: 29px; padding-left: 4px; margin-right: 6.500px; }
.mode { width: 103.500px; padding-left: 4px; }
.mode .label { width: 67.500px; margin-left: 6px; }
.label, .vmenus, .options { letter-spacing: -.27px; }
.vmenus { display: flex; width: 187px; padding: 3px 0 0 12.500px; gap: 14.500px; color: #d5d5d5; }
.orient { width: 75px; padding-left: 4px; margin-right: 5px; }
.orient .label { width: 38px; margin-left: 6px; }
.pivot { width: 30px; padding-left: 3px; margin-right: 5px; }
.snap { width: 49.500px; margin-right: 5px; }
.snap .chev { margin-left: 2px; }
.snap .ic { color: #ddd; }
.snap .half .ic { color: #a5a5a5; }
.half { width: 18.500px; height: 19px; display: grid; place-items: center; background: #4a4a4a; }
.prop .half { background: #3c3c3c; }
.half.on { background: #4772b3; color: #fff; }
.half + .ic { margin-left: 2px; }
.prop { width: 48.500px; margin-right: 16px; color: #999; background: #515151; }
.prop .half + .ic { margin-left: 4px; }
.vis { width: 30.500px; padding-left: 2px; margin-right: 5px; }
.pair { width: 37px; margin-right: 6px; }
.pair .half + .chev { margin-left: 4px; }
.xray { width: 18.500px; justify-content: center; margin-right: 4.500px; color: #bbb; }
.xray.on { background: #4772b3; color: #fff; }
.shade { width: 92.500px; }
.shade .half { color: #aaa; }
.shade .half.on { color: #fff; }

.user .head { padding-left: 7.500px; }
.user .editor { width: 28.500px; margin-right: 7.500px; }
.user .mode { width: 102px; }
.user .vmenus { width: 189px; padding-left: 13px; }
.user .orient { width: 74px; margin-right: 6.500px; }
.user .pivot { width: 28.500px; margin-right: 6px; }
.user .snap { width: 47.500px; margin-right: 6.500px; }
.user .snap .half { background: #484848; }
.user .prop { width: 47px; margin-right: 18px; background: #353535; }
.user .prop .half { background: #4c4c4c; }
.user .vis { width: 28.500px; margin-right: 7px; }
.user .pair { width: 35.500px; margin-right: 7px; }
.user .xray { width: 17.500px; margin-left: .5px; background: #484848; }

.sub { position: relative; display: flex; justify-content: space-between; height: 23px; flex: none; }
.subleft { background: rgba(46, 46, 46, .69); border-radius: 0 0 6px 0; padding: 1px 0 0 7.500px; width: 105.500px; display: flex; }
.top .subleft { width: 140px; }
.side .subleft { padding-left: 6.500px; }
.cur { width: 20px; height: 20px; margin: 0 8.500px 0 6px; }
.modes { display: flex; height: 18.500px; border-radius: 4px; overflow: hidden; }
.modes span { width: 18.200px; height: 18.500px; display: grid; place-items: center; background: #4a4a4a; color: #bfbfbf; border-right: 1px solid #3a3a3a; }
.modes .on { background: #4772b3; color: #e8eefa; }
.subright { background: rgba(46, 46, 46, .69); border-radius: 0 0 0 6px; width: 77px; padding: .5px 0 0 8.500px; }
.options { width: 61.500px; padding-left: 7px; }
.options > span { width: 41.500px; }
.user .subleft, .user .subright { background: rgba(46, 46, 46, .3); }
.user .head { background: rgba(46, 46, 46, .4); }

.body { position: relative; flex: 1; display: flex; }
.toolbar { width: 37.500px; margin: 7.500px 0 0 7.300px; display: flex; flex-direction: column; gap: 5px; }
.side .toolbar { margin-left: 6.500px; }
.group { border-radius: 5px; overflow: hidden; background: #232323; box-shadow: 0 0 1px rgba(0, 0, 0, .5); }
.tool { display: grid; place-items: center; height: 33.300px; border-bottom: 1px solid #333; position: relative; color: #ececec; }
.tool:last-child { border-bottom: 0; }
.tool .ic { width: 21px; height: 21px; }
.tool.on { background: #4772b3; }
.tool.corner::after { content: ""; position: absolute; right: 3px; bottom: 3px; border: 2px solid; border-color: transparent #999 #999 transparent; }
.user .toolbar { width: 36.500px; margin-top: 8px; gap: 6.500px; }
.user .tool { height: 32.600px; }
.info { margin: 7.500px 0 0 17.500px; color: #fff; letter-spacing: -.23px; text-shadow: 0 0 2px rgba(0, 0, 0, .55), 1px 1px 1px rgba(0, 0, 0, .4); }
.info p { margin: 0; height: 17.100px; line-height: 17px; }
.side .info { margin-left: 18px; }
.top .info { margin-left: 9px; }
.user .info { margin-top: 7px; margin-left: 17.500px; }
.nav { margin: 87px 8.500px 0 auto; display: flex; flex-direction: column; gap: 2.500px; }
.nav span { width: 26px; height: 26px; border-radius: 50%; background: #b9b9b9; color: #ededed; display: grid; place-items: center; }
.nav .ic { width: 17px; height: 17px; }
.user .nav { gap: 3px; margin-right: 8px; margin-top: 86.500px; }
.user .nav span { background: #262626; color: #ececec; }
.hdim { position: absolute; left: 684px; top: 235px; width: 18px; height: 12px; overflow: visible; }
.hdim text { font: 24px Roboto, sans-serif; fill: #222; stroke: #222; stroke-width: .6; letter-spacing: 0; }

.solid { fill: #c9c9c9; stroke: #5c5c5c; stroke-width: 1.400; }
.thin { fill: #c9c9c9; stroke: #727272; stroke-width: 1; }
.inner { fill: none; stroke: #e8e8e8; stroke-width: 1.200; }
.pale { fill: none; stroke: #bdbdbd; }
.axis { fill: none; stroke: #2b2b2b; stroke-width: 1.100; }
.mark { fill: none; stroke: rgba(130, 130, 130, .1); stroke-width: 2.500; stroke-linejoin: round; }
.mark.fine { stroke-width: 1.500; }
.wm { font-family: "Open Sans", sans-serif; font-style: italic; letter-spacing: 1px; fill: rgba(255, 255, 255, .1); stroke: rgba(120, 120, 120, .1); stroke-width: 1; }
.dimtext { font: 17px Roboto, sans-serif; fill: #222; letter-spacing: 0; }
.dimtext.big { font-size: 18px; font-weight: 500; }
.cursor { fill: none; stroke: #d87078; stroke-dasharray: 3.500 3.960; }
.origin { fill: #f0962e; stroke: #6b4310; stroke-width: .9; }
.outline { fill: none; stroke: #f59b2c; stroke-width: 1.800; stroke-linejoin: round; }
.gz { stroke-width: 1.800; }
.gz circle { stroke-width: 1.200; }
.gz text { font: 600 11px Inter, sans-serif; text-anchor: middle; fill: #101010; stroke: none; }

/* outliner */
.side-col { width: 276px; display: flex; flex-direction: column; gap: 3px; }
.outliner { height: 304px; background: #282828; border-radius: 5px; overflow: hidden; }
.ohead { display: flex; padding: 2px 0 0 7px; height: 25px; background: #2d2d2d; }
.obtn { width: 30px; height: 18px; margin-right: 6px; border: 1px solid #383838; border-radius: 4px; background: #262626; display: flex; align-items: center; padding-left: 2px; }
.field { height: 18px; width: 111px; margin: 0 16px 0 7px; background: #1d1d1d; border: 1px solid #383838; border-radius: 4px; display: flex; align-items: center; padding-left: 4px; }
.newc { width: 18px; height: 18px; background: #4a4a4a; color: #aaa; border-radius: 4px; display: grid; place-items: center; }
.tree { position: relative; height: 279px; margin-top: -.5px; background: repeating-linear-gradient(#282828 0 19px, #2b2b2b 19px 38px); }
.row { height: 19px; display: flex; align-items: center; color: #cfcfcf; }
.row > span:not(.ibox) { position: relative; top: -.5px; }
.root { padding-left: 21px; gap: 6px; }
.root .ic { color: #e8e8e8; }
.d0 { padding-left: 22px; }
.d1 { padding-left: 41.500px; }
.d2 { padding-left: 60.500px; }
.active { background: #334d80; }
.active .rname { color: #eda85a; }
.tri { width: 10px; height: 10px; display: grid; place-items: center; }
.tri::before { content: ""; border-left: 6px solid #c8c8c8; border-top: 3px solid transparent; border-bottom: 3px solid transparent; }
.tri.open::before { border-top: 6px solid #c8c8c8; border-left: 3px solid transparent; border-right: 3px solid transparent; border-bottom: 0; }
.ibox { width: 18px; height: 17px; margin: 0 4px 0 5px; border-radius: 4px; display: grid; place-items: center; }
.ibox.boxed { background: #505050; }
.active .ibox.boxed { background: #5d7299; }
.d2 .extra.boxed { background: #565a60; }
.extra { margin-left: 20px; }
.toggles { margin-left: auto; margin-right: 13px; display: flex; align-items: center; color: #e4e4e4; gap: 6px; }
.cbx { width: 10px; height: 10px; background: #e8e8e8; color: #222; display: grid; place-items: center; margin-right: 1px; border-radius: 1px; }
.cbx .ic { width: 8px; height: 8px; }
.guide { position: absolute; left: 27px; top: 42px; width: 1px; height: 142px; background: #444; }

/* properties */
.props { height: 646px; background: #303030; border-radius: 5px; overflow: hidden; }
.phead { height: 24px; display: flex; padding: 3px 0 0 8px; }
.phead .obtn { width: 28px; margin: 0; }
.phead .field { width: 107px; margin: 0 auto 0 46px; }
.phead .drop { width: 17px; margin-right: 9px; }
.pbody { display: flex; }
.ptabs { width: 27px; height: 622px; background: #1c1c1c; display: flex; flex-direction: column; padding-top: 8.700px; }
.ptabs span { height: 24px; margin: 0 0 2.750px 1px; display: grid; place-items: center; border-radius: 4px 0 0 4px; }
.ptabs .on { background: #303030; }
.ptabs .end { margin-bottom: 9.900px; }
.pmain { padding: 8.500px 0 0 7.500px; flex: 1; }
.crumb { display: flex; align-items: center; height: 15px; padding-left: 2.500px; }
.c1 { width: 73px; margin-left: 8px; }
.sep { margin: 0 4px 0 0; }
.c2 { margin-left: 8.500px; }
.pin { margin-left: auto; margin-right: 10px; color: #999; }
.addmod { margin-top: 18.500px; height: 18px; width: 233.500px; background: #545454; border-radius: 4px; display: flex; align-items: center; padding-left: 6px; }
.addmod .ic { width: 11px; height: 11px; }
.addmod span { flex: 1; text-align: center; padding-right: 0; }
.panel { margin-top: 10.500px; width: 233.500px; height: 214.500px; background: #3d3d3d; border: 1px solid #4a6ca6; border-radius: 5px; }
.pnhead { display: flex; height: 18px; margin: 1.500px 0 10.500px 3px; align-items: center; }
.fold { color: #aaa; width: 15px; height: 15px; }
.mi { margin: 0 0 0 2px; }
.mname { width: 43px; height: 18px; background: #1d1d1d; margin-left: 11px; line-height: 18px; text-align: center; border-radius: 3px 0 0 3px; margin-right: 1px; color: #eee; }
.mb { width: 18px; height: 18px; margin-right: 1px; background: #545454; color: #e8e8e8; display: grid; place-items: center; }
.mb.on { background: #4772b3; color: #fff; }
.mb.dd { background: #262626; border-radius: 0 3px 3px 0; }
.cx { width: 12px; height: 12px; margin-left: 4px; }
.grip { width: 11px; height: 4px; margin-left: 15px; background: radial-gradient(circle, #777 .6px, transparent .9px) 0 0 / 2.750px 2px; }
.prow { display: flex; align-items: center; height: 18px; margin-bottom: 3px; }
.prow.gap { margin-top: 10.500px; }
.prow label { width: 82px; text-align: right; margin-right: 9.500px; }
.tri3 { width: 113.500px; height: 17.500px; display: flex; gap: 1px; border-radius: 4px; overflow: hidden; background: #3a3a3a; }
.tri3 span { flex: 1; background: #545454; text-align: center; line-height: 18px; }
.tri3 .on { background: #4772b3; color: #fff; }
.off { color: #777; }
.off .tri3 span, .off .num { background: #464646; }
.prow .pick { width: 113.500px; height: 17.500px; background: #1d1d1d; border-radius: 4px; padding: 0 3px; justify-content: space-between; color: #e4e4e4; }
.dr { color: #bbb; }
.cb { width: 12px; height: 12px; background: #545454; border-radius: 2px; display: grid; place-items: center; }
.cb.on { background: #4772b3; color: #fff; }
.cb .ic { width: 10px; height: 10px; }
.cl { margin-left: 4px; width: 97.500px; }
.num { width: 113.500px; height: 17.500px; line-height: 18px; background: #545454; border-radius: 4px; text-align: center; }
.num.short { width: 94.500px; margin-left: 7px; }
.kd { width: 4px; height: 4px; border-radius: 50%; background: #ddd; margin-left: 8.500px; }
.off .kd { background: #777; }
.data { display: flex; align-items: center; margin: 13.500px 0 0 18.500px; gap: 2px; }
.data .ic { color: #bbb; width: 13px; height: 13px; }

.status { display: flex; align-items: center; flex: 1; padding: 0 11px 0 8px; color: #9a9a9a; }
.hint { display: flex; align-items: center; width: 200.500px; gap: 10px; }
.hint .ic { height: 15px; width: 15px; }
.ver { margin-left: auto; letter-spacing: 0; }
</style>
